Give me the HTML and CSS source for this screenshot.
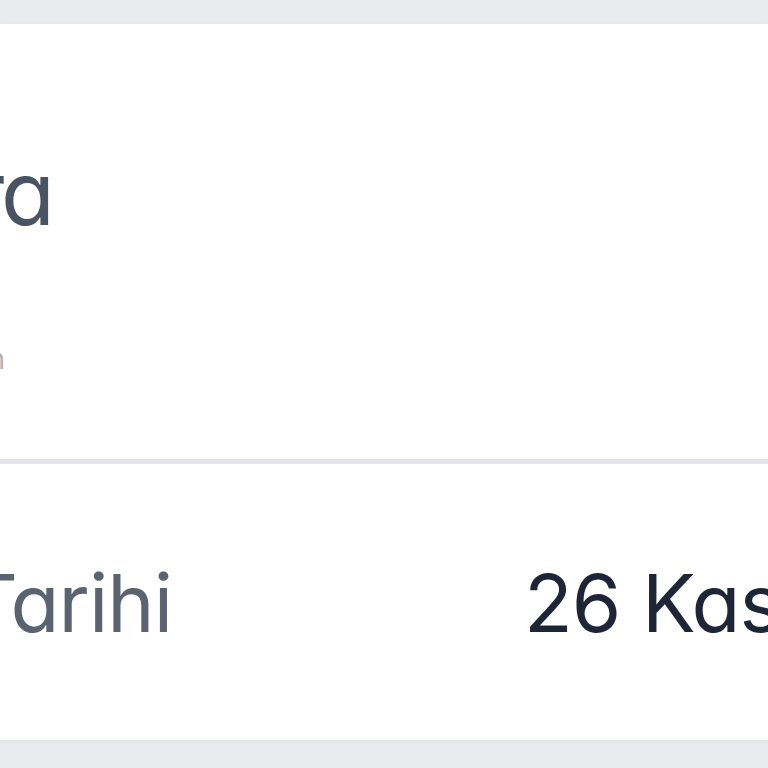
FILE: index.html
```html
<!DOCTYPE html>
<html lang="tr">
<head>
    <meta charset="UTF-8">
    <meta name="viewport" content="width=device-width, initial-scale=1.0">
    <title>Kira Detayı</title>
    <link rel="stylesheet" href="styles.css">
</head>
<body>
    <div class="card">
        <div class="summary">
            <div class="edge">
                <span class="title">Aylık Kira</span>
            </div>
            <div class="edge sub-edge">
                <span class="subtitle">Sözleşme dönemin</span>
            </div>
        </div>
        <div class="row">
            <div class="edge label-edge">
                <span class="label">Ödeme Tarihi</span>
            </div>
            <span class="value">26 Kasım 2023</span>
        </div>
    </div>
</body>
</html>
```

FILE: styles.css
```css
body {
    margin: 0;
    height: 768px;
    overflow: hidden;
    background: #e9eaee;
    font-family: Inter, "Noto Sans", sans-serif;
    font-feature-settings: "cv11" 1;
}
.card {
    margin-top: 24px;
    background: #fff;
    box-shadow: 0 1px 3px rgba(0, 0, 0, 0.05);
}
.summary {
    height: 440px;
    box-sizing: border-box;
    padding-top: 125px;
    border-bottom: 5px solid #e4e5ea;
}
.edge {
    display: flex;
    justify-content: flex-end;
    width: 52px;
    white-space: nowrap;
}
.title {
    font-size: 88px;
    line-height: 88px;
    color: #4a5361;
    letter-spacing: -3px;
}
.sub-edge {
    width: 5px;
    margin-top: 108px;
}
.subtitle {
    font-size: 28px;
    line-height: 28px;
    color: #adb1b8;
}
.row {
    height: 276px;
    display: flex;
    align-items: center;
    white-space: nowrap;
    overflow: hidden;
}
.label-edge {
    width: 172px;
    flex-shrink: 0;
}
.label {
    font-size: 80px;
    color: #5c6370;
    letter-spacing: -1px;
}
.value {
    margin-left: 352px;
    font-size: 80px;
    color: #1e2536;
    letter-spacing: -1px;
}
```
